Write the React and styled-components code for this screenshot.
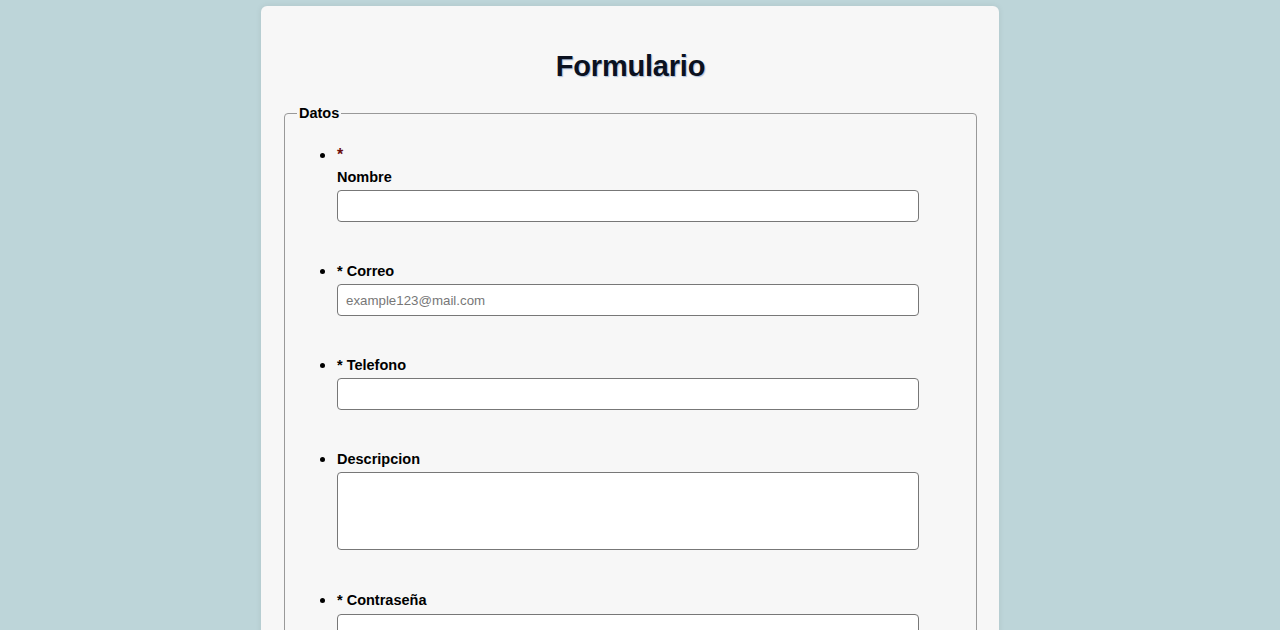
import React from 'react';
import styled, { createGlobalStyle } from 'styled-components';

const GlobalStyle = createGlobalStyle`
  body {
    margin: 0;
    background-color: #bdd5d9;
    font-family: 'Liberation Sans', Arial, sans-serif;
    padding-right: 20px;
  }
`;

const Card = styled.main`
  width: 738px;
  box-sizing: border-box;
  margin: 6px auto 0 auto;
  padding: 1px 20px 40px 21px;
  background-color: #f7f7f7;
  border-radius: 6px;
  box-shadow: 0 0 6px rgba(0, 0, 0, 0.08);
`;

const Title = styled.h1`
  text-align: center;
  font-size: 29px;
  font-weight: bold;
  color: #0b1120;
  text-shadow: 1px 1px 1px rgba(30, 80, 160, 0.35);
  margin: 43px 0 22px 0;
  letter-spacing: -0.2px;
`;

const Fieldset = styled.fieldset`
  border: 1px solid #999;
  border-radius: 4px;
  margin: 0 2px;
  padding: 0 12px 10px 12px;
`;

const Legend = styled.legend`
  font-size: 14.5px;
  font-weight: bold;
  padding: 0 2px;
  color: #000;
`;

const List = styled.ul`
  margin: 25px 0 0 0;
  padding-left: 40px;
`;

const Item = styled.li`
  margin-bottom: ${(p) => (p.$tall ? '41px' : '40px')};
  font-size: 14.5px;
  line-height: 17px;

  &::marker {
    font-size: 18px;
  }
`;

const Label = styled.label`
  display: block;
  font-weight: bold;
  color: #000;
  margin-bottom: ${(p) => (p.$loose ? '5px' : '4px')};
`;

const Star = styled.span`
  display: ${(p) => (p.$block ? 'block' : 'inline')};
  color: ${(p) => (p.$block ? '#6b0f0f' : '#000')};
  font-size: ${(p) => (p.$block ? '16px' : 'inherit')};
  margin-bottom: ${(p) => (p.$block ? '6px' : '0')};
`;

const Input = styled.input`
  display: block;
  width: 582px;
  height: 32px;
  box-sizing: border-box;
  border: 1px solid #777;
  border-radius: 4px;
  background: #fff;
  padding: 0 8px;
  font-family: 'Liberation Sans', Arial, sans-serif;
  font-size: 13.3px;

  &::placeholder {
    color: #777;
  }
`;

const TextArea = styled.textarea`
  display: block;
  width: 582px;
  height: 78px;
  box-sizing: border-box;
  border: 1px solid #777;
  border-radius: 4px;
  background: #fff;
  resize: none;
  font-family: 'Liberation Sans', Arial, sans-serif;
`;

const App = () => {
  return (
    <>
      <GlobalStyle />
      <Card>
        <Title>Formulario</Title>
        <Fieldset>
          <Legend>Datos</Legend>
          <List>
            <Item>
              <Label>
                <Star $block>*</Star>
                Nombre
              </Label>
              <Input type="text" />
            </Item>
            <Item>
              <Label>
                <Star>*</Star> Correo
              </Label>
              <Input type="email" placeholder="example123@mail.com" />
            </Item>
            <Item>
              <Label>
                <Star>*</Star> Telefono
              </Label>
              <Input type="tel" />
            </Item>
            <Item $tall>
              <Label>Descripcion</Label>
              <TextArea />
            </Item>
            <Item>
              <Label $loose>
                <Star>*</Star> Contraseña
              </Label>
              <Input type="password" />
            </Item>
          </List>
        </Fieldset>
      </Card>
    </>
  );
};

export default App;
